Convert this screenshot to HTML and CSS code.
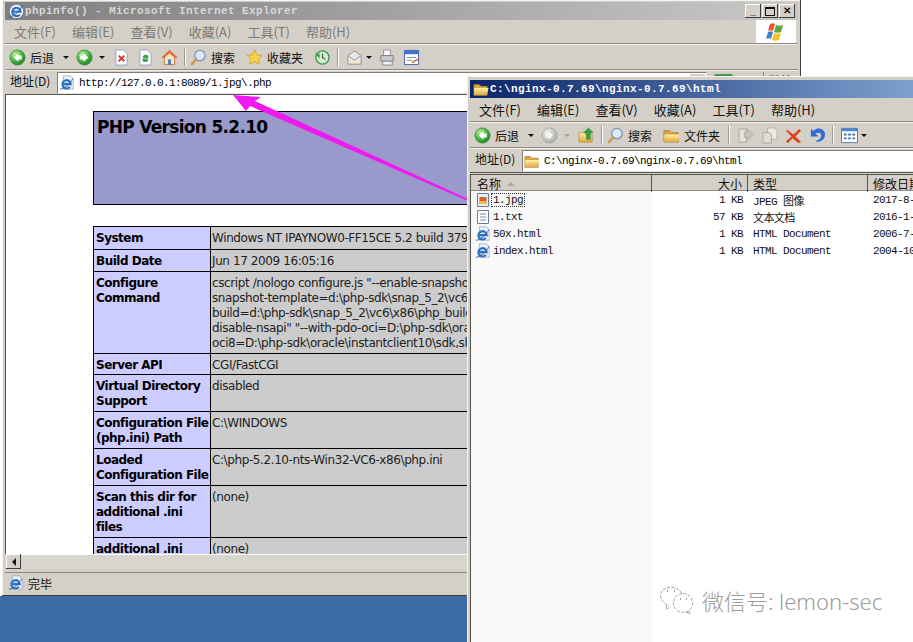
FILE: index.html
```html
<!DOCTYPE html>
<html>
<head>
  <title>phpinfo()</title>
  <link rel="stylesheet" href="styles.css">
</head>
<body>
  <!-- shared icons -->
  <svg class="defs" width="0" height="0">
    <defs>
      <radialGradient id="green" cx="35%" cy="30%" r="80%"><stop offset="0" stop-color="#bdf0a0"/><stop offset="0.6" stop-color="#3fae3a"/><stop offset="1" stop-color="#1c7a26"/></radialGradient>
      <radialGradient id="grey" cx="35%" cy="30%" r="80%"><stop offset="0" stop-color="#eeeeee"/><stop offset="1" stop-color="#a8a8a0"/></radialGradient>
      <linearGradient id="fold" x1="0" y1="0" x2="0" y2="1"><stop offset="0" stop-color="#fff0a8"/><stop offset="1" stop-color="#e0a83a"/></linearGradient>
      <symbol id="back" viewBox="0 0 18 18"><circle cx="9" cy="9" r="8" fill="url(#green)" stroke="#2c8a34" stroke-width=".8"/><path d="M10 4.500 5 9l5 4.500V11h3.500V7H10z" fill="#fff"/></symbol>
      <symbol id="fwd" viewBox="0 0 18 18"><circle cx="9" cy="9" r="8" fill="url(#green)" stroke="#2c8a34" stroke-width=".8"/><path d="M8 4.500 13 9l-5 4.500V11H4.500V7H8z" fill="#fff"/></symbol>
      <symbol id="fwd-off" viewBox="0 0 18 18"><circle cx="9" cy="9" r="8" fill="url(#grey)" stroke="#a0a098" stroke-width=".8"/><path d="M8 4.500 13 9l-5 4.500V11H4.500V7H8z" fill="#f4f4f0"/></symbol>
      <symbol id="stop" viewBox="0 0 16 18"><path d="M2 1h8l4 4v12H2z" fill="#fff" stroke="#8fa3c4"/><path d="M5 7l6 6M11 7l-6 6" stroke="#d83a2a" stroke-width="2"/></symbol>
      <symbol id="refresh" viewBox="0 0 16 18"><path d="M2 1h8l4 4v12H2z" fill="#fff" stroke="#8fa3c4"/><path d="M5 9a3 3 0 0 1 5-2l1-1v4H7.500l1-1a2 2 0 0 0-2 .5zM11 11a3 3 0 0 1-5 2l-1 1v-4h3.500l-1 1a2 2 0 0 0 2-.5z" fill="#2d9a3c"/></symbol>
      <symbol id="home" viewBox="0 0 18 18"><path d="M9 1.500 1 9h2.500v7.500h11V9H17z" fill="#f2e4c4" stroke="#c07a3a"/><path d="M9 1.500 1 9h3l5-4.500L14 9h3z" fill="#e8662a"/><path d="M7.500 11h3v5.500h-3z" fill="#4a78c0"/></symbol>
      <symbol id="search" viewBox="0 0 18 18"><circle cx="10.500" cy="7" r="5.500" fill="#dbeaf8" stroke="#7a90b0" stroke-width="1.300"/><path d="M6.500 11 2 16" stroke="#c89a50" stroke-width="2.500" stroke-linecap="round"/></symbol>
      <symbol id="star" viewBox="0 0 18 18"><path d="M9 1l2.400 5.200 5.600.7-4.100 3.800 1.100 5.500L9 13.500 4 16.200l1.100-5.500L1 6.900l5.600-.7z" fill="#f7d23e" stroke="#d09a28" stroke-width=".8"/></symbol>
      <symbol id="history" viewBox="0 0 18 18"><circle cx="9" cy="9" r="7" fill="#d6ecd2" stroke="#3f9a50" stroke-width="1.500"/><path d="M9 5v4l3 2" stroke="#3a5a40" stroke-width="1.200" fill="none"/><path d="M1 5h5v5z" fill="#3f9a50"/></symbol>
      <symbol id="mail" viewBox="0 0 18 18"><path d="M2 7 9 2l7 5v9H2z" fill="#f4e8c8" stroke="#7d93b8"/><path d="M2 7l7 5 7-5" fill="#dbe6f6" stroke="#7d93b8"/></symbol>
      <symbol id="print" viewBox="0 0 18 18"><path d="M5 1h7v6H5z" fill="#fff" stroke="#8a8a8a"/><path d="M2 7h13v6H2z" fill="#c8ccd4" stroke="#7a7a7a"/><path d="M4 13h10v4H4z" fill="#eef0f4" stroke="#8a8a8a"/></symbol>
      <symbol id="edit" viewBox="0 0 18 18"><path d="M1.500 1.500h15v15h-15z" fill="#fff" stroke="#3f62a8"/><path d="M1.500 1.500h15v4h-15z" fill="#3f72c8"/><path d="M4 9h10M4 12h6" stroke="#7a8ca8"/><path d="M9 14l6-4 1.500 1-6 4z" fill="#d8702a"/></symbol>
      <symbol id="ie" viewBox="0 0 18 18"><path d="M5 1h8l3 3v12H5z" fill="#eef2f8" stroke="#8ba0c2" stroke-width=".8"/><path d="M3.800 10.200h9.400a4.700 4.700 0 1 0-1 3.200" fill="#cfe3f8" stroke="#2f70c0" stroke-width="2.400"/><path d="M1 16c3 .5 12-6 14.500-12" stroke="#1f5aa8" fill="none"/></symbol>
      <symbol id="ie-title" viewBox="0 0 18 18"><circle cx="9.500" cy="9.500" r="7.500" fill="#f2f6fb"/><path d="M4.800 9.800h9.400a4.700 4.700 0 1 0-1 3.200" fill="#d8e8fa" stroke="#2f70c0" stroke-width="2.400"/><path d="M1 16c3 .5 12-6 15-13" stroke="#1f5aa8" fill="none"/></symbol>
      <symbol id="folder" viewBox="0 0 18 16"><path d="M1 3h6l2 2h7v10H1z" fill="#d8a83e" stroke="#9a7a30" stroke-width=".8"/><path d="M1.500 7h16l-2 8H1z" fill="url(#fold)"/></symbol>
      <symbol id="flag" viewBox="0 0 22 22"><path d="M5 3c2-1 4-1 5 0l-2 7c-1-1-3-1-5 0z" fill="#e8552e"/><path d="M11 4c2 1 4 1 7 0l-2 7c-2 1-5 1-7 0z" fill="#5ca83e"/><path d="M3 11c2-1 4-1 5 0l-2 7c-1-1-3-1-5 0z" fill="#3f7fd0"/><path d="M9 12c2 1 4 1 7 0l-2 7c-2 1-5 1-7 0z" fill="#f2c230"/></symbol>
      <symbol id="txt" viewBox="0 0 14 16"><path d="M1.500 1.500h11v13h-11z" fill="#fff" stroke="#6a7d9c"/><path d="M4 5h6M4 8h6M4 11h6" stroke="#7a8a9c"/></symbol>
      <symbol id="jpg" viewBox="0 0 14 16"><path d="M1.500 1.500h11v13h-11z" fill="#e8eef8" stroke="#6a7d9c"/><path d="M3.500 5h7v7h-7z" fill="#d8602a"/><path d="M3.500 9h7v3h-7z" fill="#f2c040"/></symbol>
      <symbol id="up" viewBox="0 0 18 18"><path d="M1 6h6l1 2h7v8H1z" fill="url(#fold)" stroke="#a8863a" stroke-width=".7"/><path d="M11 1l5 5h-3v7H9V6H6z" fill="#38a03a" stroke="#1e7a2a" stroke-width=".5"/></symbol>
      <symbol id="move" viewBox="0 0 18 18"><path d="M2 2h8v14H2z" fill="#e4e2da" stroke="#a8a8a0"/><path d="M8 5h3V2l6 6-6 6v-3H8z" fill="#c4c4bc" stroke="#a0a098" stroke-width=".6"/></symbol>
      <symbol id="copy" viewBox="0 0 18 18"><path d="M7 1h7l3 3v9H7z" fill="#ece9e2" stroke="#b0b0a8"/><path d="M2 6h7l2 2v9H2z" fill="#dedcd4" stroke="#a8a8a0"/></symbol>
      <symbol id="del" viewBox="0 0 18 18"><path d="M2 3l7 5 6-6 2 2-6 6 6 6-3 1-6-5-5 5-2-2 6-5-6-6z" fill="#e0401c"/></symbol>
      <symbol id="undo" viewBox="0 0 18 18"><path d="M2 2v8h8L7 7c3-2 6-1 6 2s-3 5-6 6c5 2 10-2 10-7S10-1 5 4z" fill="#2f6cd8"/></symbol>
      <symbol id="views" viewBox="0 0 18 16"><path d="M.5.500h17v15H.500z" fill="#fff" stroke="#4a78b8"/><path d="M.5.500h17v3H.500z" fill="#4a86d0"/><path d="M3 6h3v2H3zM7.500 6h3v2h-3zM12 6h3v2h-3zM3 10h3v2H3zM7.500 10h3v2h-3zM12 10h3v2h-3z" fill="#4a78b8"/></symbol>
    </defs>
  </svg>

  <div class="desktop">
    <!-- IE window -->
    <div class="win ie-win">
      <div class="titlebar off">
        <svg class="ico16"><use href="#ie-title"/></svg>
        <span class="title">phpinfo() - Microsoft Internet Explorer</span>
        <div class="caption">
          <span class="capbtn">_</span><span class="capbtn box"></span><span class="capbtn">&#10005;</span>
        </div>
      </div>
      <div class="menubar off-text">
        <span>文件(F)</span><span>编辑(E)</span><span>查看(V)</span><span>收藏(A)</span><span>工具(T)</span><span>帮助(H)</span>
        <div class="flagbox"><svg class="flag"><use href="#flag"/></svg></div>
      </div>
      <div class="toolbar">
        <svg class="ico18"><use href="#back"/></svg><span class="tlabel">后退</span><i class="drop d1"></i>
        <svg class="ico18"><use href="#fwd"/></svg><i class="drop d2"></i>
        <svg class="ico18"><use href="#stop"/></svg>
        <svg class="ico18 gap-s"><use href="#refresh"/></svg>
        <svg class="ico18 gap-s"><use href="#home"/></svg>
        <b class="sep"></b>
        <svg class="ico18"><use href="#search"/></svg><span class="tlabel">搜索</span>
        <svg class="ico18 gap-m"><use href="#star"/></svg><span class="tlabel">收藏夹</span>
        <svg class="ico18 gap-m"><use href="#history"/></svg>
        <b class="sep"></b>
        <svg class="ico18 gap-x"><use href="#mail"/></svg><i class="drop d3"></i>
        <svg class="ico18"><use href="#print"/></svg>
        <svg class="ico18 gap-s"><use href="#edit"/></svg>
      </div>
      <div class="addrbar">
        <span class="addrlabel">地址(D)</span>
        <div class="addrbox">
          <svg class="ico16"><use href="#ie"/></svg>
          <span class="mono">http://127.0.0.1:8089/1.jpg\.php</span>
          <i class="combo"></i>
        </div>
        <div class="go"><i></i><span>转到</span></div>
        <div class="links">链接</div>
      </div>
      <div class="content">
        <div class="php">
          <div class="php-head"><h1>PHP Version 5.2.10</h1></div>
          <table class="php-table">
            <tr class="first"><th>System</th><td>Windows NT IPAYNOW0-FF15CE 5.2 build 3790</td></tr>
            <tr><th>Build Date</th><td>Jun 17 2009 16:05:16</td></tr>
            <tr><th>Configure<br>Command</th><td>cscript /nologo configure.js "--enable-snapshot-build" "--enable-<br>snapshot-template=d:\php-sdk\snap_5_2\vc6\x86\template" "--<br>build=d:\php-sdk\snap_5_2\vc6\x86\php_build" "--<br>disable-nsapi" "--with-pdo-oci=D:\php-sdk\oracle\instantclient10<br>oci8=D:\php-sdk\oracle\instantclient10\sdk,shared"</td></tr>
            <tr class="tight"><th>Server API</th><td>CGI/FastCGI</td></tr>
            <tr><th>Virtual Directory<br>Support</th><td>disabled</td></tr>
            <tr><th>Configuration File<br>(php.ini) Path</th><td>C:\WINDOWS</td></tr>
            <tr><th>Loaded<br>Configuration File</th><td>C:\php-5.2.10-nts-Win32-VC6-x86\php.ini</td></tr>
            <tr><th>Scan this dir for<br>additional .ini<br>files</th><td>(none)</td></tr>
            <tr><th>additional .ini<br>files parsed</th><td>(none)</td></tr>
          </table>
        </div>
      </div>
      <div class="hscroll">
        <span class="sbtn"><i></i></span>
      </div>
      <div class="status">
        <svg class="ico16"><use href="#ie"/></svg><span>完毕</span>
      </div>
    </div>

    <svg class="arrow" width="913" height="642">
      <path d="M233 95 261 97 255 101 468 199 468 201 250 106 246 111z" fill="#f01af0"/>
    </svg>

    <!-- explorer window -->
    <div class="win ex-win">
      <div class="titlebar on">
        <svg class="ico16"><use href="#folder"/></svg>
        <span class="title">C:\nginx-0.7.69\nginx-0.7.69\html</span>
      </div>
      <div class="menubar">
        <span>文件(F)</span><span>编辑(E)</span><span>查看(V)</span><span>收藏(A)</span><span>工具(T)</span><span>帮助(H)</span>
      </div>
      <div class="toolbar">
        <svg class="ico18"><use href="#back"/></svg><span class="tlabel">后退</span><i class="drop d1"></i>
        <svg class="ico18"><use href="#fwd-off"/></svg><i class="drop d2 dim"></i>
        <svg class="ico18"><use href="#up"/></svg>
        <b class="sep"></b>
        <svg class="ico18"><use href="#search"/></svg><span class="tlabel">搜索</span>
        <svg class="ico18 gap-m"><use href="#folder"/></svg><span class="tlabel">文件夹</span>
        <b class="sep wide"></b>
        <svg class="ico18 gap-x"><use href="#move"/></svg>
        <svg class="ico18 gap-s"><use href="#copy"/></svg>
        <svg class="ico18 gap-s"><use href="#del"/></svg>
        <svg class="ico18 gap-s"><use href="#undo"/></svg>
        <b class="sep"></b>
        <svg class="ico18 gap-x"><use href="#views"/></svg><i class="drop d3"></i>
      </div>
      <div class="addrbar">
        <span class="addrlabel">地址(D)</span>
        <div class="addrbox">
          <svg class="ico16"><use href="#folder"/></svg>
          <span class="mono">C:\nginx-0.7.69\nginx-0.7.69\html</span>
        </div>
      </div>
      <div class="list">
        <div class="row head">
          <span class="c-name">名称 <i class="sort"></i></span><span class="c-size">大小</span><span class="c-type">类型</span><span class="c-date">修改日期</span>
        </div>
        <div class="row"><span class="c-name"><svg class="ico16"><use href="#jpg"/></svg><em class="focus">1.jpg</em></span><span class="c-size">1 KB</span><span class="c-type">JPEG 图像</span><span class="c-date">2017-8-1</span></div>
        <div class="row"><span class="c-name"><svg class="ico16"><use href="#txt"/></svg><em>1.txt</em></span><span class="c-size">57 KB</span><span class="c-type">文本文档</span><span class="c-date">2016-1-1</span></div>
        <div class="row"><span class="c-name"><svg class="ico16"><use href="#ie"/></svg><em>50x.html</em></span><span class="c-size">1 KB</span><span class="c-type">HTML Document</span><span class="c-date">2006-7-1</span></div>
        <div class="row"><span class="c-name"><svg class="ico16"><use href="#ie"/></svg><em>index.html</em></span><span class="c-size">1 KB</span><span class="c-type">HTML Document</span><span class="c-date">2004-10-1</span></div>
        <div class="name-tint"></div>
      </div>
    </div>

    <div class="mark">
      <svg width="38" height="30" viewBox="0 0 38 30" fill="none" stroke="#a0a0a0" stroke-width="1" stroke-dasharray="3 1.500">
        <path d="M9 20C3 16 1 11 4 6c4-5 14-5 18 0 1 1 2 3 2 4"/>
        <path d="M9 20l-1 4 5-2"/>
        <circle cx="25" cy="18" r="9.500"/>
        <path d="M31 26l1 3-4-2"/>
        <path d="M9 6h1M16 6h1M22 14h1M28 14h1" stroke-width="2" stroke-dasharray="none"/>
      </svg>
      <span>微信号: lemon-sec</span>
    </div>
  </div>
</body>
</html>
```

FILE: styles.css
```css
html, body {
  margin: 0;
  height: 100%;
  overflow: hidden;
  background-color: #fff;
}

.defs {
  position: absolute;
}

.desktop {
  position: relative;
  width: 913px;
  height: 642px;
  overflow: hidden;
  background: linear-gradient(#fff 596px, #3c6ca3 596px);
  font-family: "Noto Sans CJK SC", sans-serif;
  font-size: 12px;
  color: #111;
}

/* windows */
.win {
  position: absolute;
  box-sizing: border-box;
  display: flex;
  flex-direction: column;
  background-color: #d4d0c8;
  padding: 2px 3px 3px;
  box-shadow: inset -1px -1px 0 #404040, inset 1px 1px 0 #f4f2ee;
}

.ie-win {
  left: 2px;
  top: 0;
  width: 799px;
  height: 596px;
}

.ex-win {
  left: 467px;
  top: 76px;
  width: 600px;
  height: 600px;
  padding-top: 4px;
}

.titlebar {
  display: flex;
  align-items: center;
  gap: 0;
  height: 18px;
  flex: none;
  padding-left: 3px;
}

.titlebar.off {
  background: linear-gradient(90deg, #7f7f7f, #c8c8c8);
  color: #d8d8d8;
}

.titlebar.on {
  background: linear-gradient(90deg, #0a246a, #a6caf0);
  color: #fff;
}

.title {
  margin-left: 1px;
  font-family: "Liberation Mono", monospace;
  font-size: 11px;
  font-weight: bold;
  letter-spacing: .4px;
  white-space: nowrap;
}

.caption {
  margin-left: auto;
  margin-right: 3px;
  display: flex;
  gap: 1px;
}

.capbtn {
  box-sizing: border-box;
  width: 16px;
  height: 14px;
  background-color: #d4d0c8;
  color: #111;
  font: bold 10px/13px "Liberation Sans", sans-serif;
  text-align: center;
  box-shadow: inset -1px -1px 0 #404040, inset 1px 1px 0 #fff;
}

.capbtn.box {
  position: relative;
}

.capbtn.box::after {
  content: "";
  position: absolute;
  left: 3px;
  top: 3px;
  width: 8px;
  height: 6px;
  border: 1px solid #111;
  border-top-width: 2px;
}

.menubar {
  display: flex;
  align-items: center;
  flex: none;
  height: 23px;
  padding-left: 9px;
  gap: 16px;
  font-size: 13px;
  border-bottom: 1px solid #8c8a84;
  white-space: nowrap;
}

.off-text {
  color: #7c7a74;
}

.flagbox {
  margin-left: auto;
  margin-right: 2px;
  width: 40px;
  height: 23px;
  background-color: #fff;
  display: flex;
  align-items: center;
  justify-content: center;
}

.flag {
  width: 22px;
  height: 22px;
}

.toolbar {
  display: flex;
  align-items: center;
  flex: none;
  height: 24px;
  padding-left: 4px;
  border-top: 1px solid #f4f2ee;
  border-bottom: 1px solid #8c8a84;
  white-space: nowrap;
  font-size: 12px;
}

.ico18 {
  width: 17px;
  height: 17px;
  flex: none;
}

.ico16 {
  width: 16px;
  height: 16px;
  flex: none;
}

.gap-s {
  margin-left: 7px;
}

.gap-m {
  margin-left: 11px;
}

.gap-x {
  margin-left: 3px;
}

.tlabel {
  margin-left: 4px;
}

.drop {
  width: 0;
  height: 0;
  margin: 0 7px 0 9px;
  border: 3px solid transparent;
  border-top: 3px solid #111;
  border-bottom: 0;
}

.drop.d2 {
  margin: 0 8px 0 6px;
}

.drop.d3 {
  margin: 0 7px 0 3px;
}

.drop.dim {
  border-top-color: #a0a098;
}

.sep {
  width: 1px;
  height: 18px;
  margin: 0 5px 0 6px;
  background-color: #9c9a94;
  box-shadow: 1px 0 0 #fff;
}

.sep.wide {
  margin-left: 8px;
}

.addrbar {
  display: flex;
  align-items: center;
  flex: none;
  height: 23px;
  padding-left: 5px;
  border-top: 1px solid #f4f2ee;
  border-bottom: 1px solid #55534e;
  white-space: nowrap;
}

.addrlabel {
  width: 47px;
  padding-bottom: 5px;
  font-size: 12px;
}

.addrbox {
  display: flex;
  align-items: center;
  gap: 4px;
  position: relative;
  flex: 1;
  height: 22px;
  box-sizing: border-box;
  padding-left: 1px;
  background-color: #fff;
  border: 1px solid #7f7d78;
  border-right-color: #e8e6e0;
  border-bottom-color: #e8e6e0;
}

.mono {
  font-family: "Liberation Mono", monospace;
  font-size: 11px;
  letter-spacing: -.6px;
  color: #000;
}

.combo {
  position: absolute;
  right: 1px;
  top: 1px;
  width: 15px;
  height: 18px;
  background-color: #d4d0c8;
}

.go {
  display: flex;
  align-items: center;
  gap: 4px;
  width: 56px;
  padding-left: 7px;
  box-sizing: border-box;
  height: 22px;
}

.go i {
  width: 19px;
  height: 18px;
  background-color: #3f9a50;
  border-radius: 2px;
}

.links {
  height: 22px;
  width: 35px;
  padding-left: 5px;
  box-sizing: border-box;
  border-left: 1px solid #8c8a84;
}

/* page inside the browser */
.content {
  flex: 1;
  overflow: hidden;
  background-color: #fff;
  border: 1px solid #55534e;
  border-top: 0;
  border-bottom: 0;
}

.php {
  width: 640px;
  margin-left: 87px;
  padding-top: 16px;
  font-family: "DejaVu Sans", sans-serif;
  font-size: 12px;
  line-height: 15px;
  color: #111;
}

.php-head {
  box-sizing: border-box;
  height: 94px;
  padding: 4px 3px;
  background-color: #9999cc;
  border: 1px solid #000;
}

.php-head h1 {
  margin: 0;
  font-size: 17px;
  line-height: 22px;
  letter-spacing: -.7px;
  font-weight: bold;
  color: #000;
}

.php-table {
  width: 100%;
  margin-top: 21px;
  border-collapse: collapse;
  table-layout: fixed;
}

.php-table th,
.php-table td {
  padding: 4px 2px 2px;
  border: 1px solid #000;
  text-align: left;
  vertical-align: top;
  white-space: nowrap;
  overflow: hidden;
}

.php-table th {
  width: 112px;
  background-color: #ccccff;
  color: #000;
  letter-spacing: -.5px;
}

.php-table td {
  padding-left: 1px;
  background-color: #cccccc;
  color: #222;
  letter-spacing: -.4px;
}

.first th,
.first td {
  padding-bottom: 3px;
}

.tight th,
.tight td {
  padding-bottom: 1px;
}

.hscroll {
  flex: none;
  height: 15px;
  margin: 0 1px;
  background-color: #d8d5ce;
  box-shadow: inset 0 1px 0 #fff;
}

.sbtn {
  display: flex;
  align-items: center;
  justify-content: center;
  width: 15px;
  height: 15px;
  background-color: #d4d0c8;
  box-shadow: inset -1px -1px 0 #404040, inset 1px 1px 0 #fff;
}

.sbtn i {
  border: 4px solid transparent;
  border-right: 4px solid #111;
  border-left: 0;
}

.status {
  display: flex;
  align-items: center;
  gap: 4px;
  flex: none;
  height: 21px;
  margin-top: 3px;
  padding-left: 3px;
  border-top: 1px solid #8c8a84;
  box-sizing: border-box;
}

/* arrow drawn on the screenshot */
.arrow {
  position: absolute;
  left: 0;
  top: 0;
}

/* file list */
.list {
  position: relative;
  flex: 1;
  margin-top: 1px;
  background-color: #fff;
  border-top: 1px solid #55534e;
  border-left: 1px solid #55534e;
  font-family: "Liberation Mono", "Noto Sans CJK SC", monospace;
}

.name-tint {
  position: absolute;
  left: 0;
  top: 16px;
  bottom: 0;
  width: 181px;
  background-color: #f8f8f8;
}

.row {
  position: relative;
  z-index: 1;
  display: grid;
  grid-template-columns: 181px 96px 120px 1fr;
  align-items: center;
  height: 17px;
  font-size: 11px;
  letter-spacing: -.6px;
  color: #111;
}

.row.head {
  height: 16px;
  font-family: "Noto Sans CJK SC", sans-serif;
  font-size: 12px;
  letter-spacing: 0;
  background-color: #d4d0c8;
  border-bottom: 1px solid #8c8a84;
  box-sizing: border-box;
}

.row span {
  display: flex;
  align-items: center;
  height: 100%;
  white-space: nowrap;
}

.row.head span {
  box-sizing: border-box;
  border-right: 1px solid #55534e;
}

.c-name {
  padding-left: 6px;
}

.row:not(.head) .c-name {
  padding-left: 4px;
  gap: 1px;
}

.c-size {
  justify-content: flex-end;
  padding-right: 5px;
}

.c-type,
.c-date {
  padding-left: 5px;
}

.row em {
  font-style: normal;
  padding: 0 1px;
}

.focus {
  outline: 1px dotted #333;
}

.sort {
  margin-left: 6px;
  border: 4px solid transparent;
  border-bottom: 4px solid #a8a69e;
  border-top: 0;
}

/* watermark */
.mark {
  position: absolute;
  left: 658px;
  top: 584px;
  display: flex;
  align-items: center;
  gap: 6px;
  font-family: "Noto Sans", "Noto Sans CJK SC", sans-serif;
  font-size: 22px;
  font-weight: 300;
  color: #9c9c9c;
  white-space: nowrap;
}
```
